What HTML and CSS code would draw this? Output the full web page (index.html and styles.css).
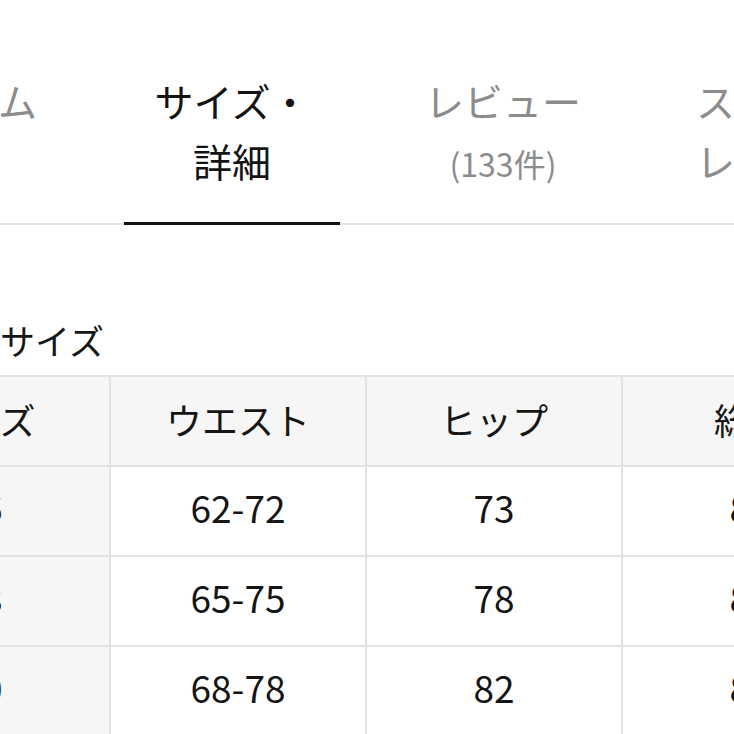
FILE: index.html
```html
<!DOCTYPE html>
<html lang="ja">
<head>
<meta charset="utf-8">
<link rel="stylesheet" href="styles.css">
</head>
<body>
<div class="page">
  <nav class="tabs">
    <div class="tab">アイテム<br>説明</div>
    <div class="tab active">サイズ・<br>詳細</div>
    <div class="tab">レビュー<br><span class="count">(133件)</span></div>
    <div class="tab">スタッフ<br>レビュー</div>
  </nav>
  <section class="content">
    <h2 class="heading">サイズ</h2>
    <table class="size-table">
      <thead>
        <tr><th>サイズ</th><th>ウエスト</th><th>ヒップ</th><th>総丈</th></tr>
      </thead>
      <tbody>
        <tr><td class="first">56</td><td>62-72</td><td>73</td><td>88</td></tr>
        <tr><td class="first">58</td><td>65-75</td><td>78</td><td>88</td></tr>
        <tr><td class="first">60</td><td>68-78</td><td>82</td><td>89</td></tr>
        <tr><td class="first">62</td><td>71-81</td><td>86</td><td>89</td></tr>
      </tbody>
    </table>
  </section>
</div>
</body>
</html>
```
FILE: styles.css
```css
html, body {
  margin: 0;
  padding: 0;
  background: #ffffff;
}
body {
  width: 734px;
  height: 734px;
  overflow: hidden;
  font-family: "Noto Sans CJK JP", "Noto Sans", sans-serif;
  color: #161616;
}
.page {
  width: 734px;
}
.tabs {
  display: flex;
  gap: 55px;
  margin-left: -147px;
  width: 1100px;
  border-bottom: 2px solid #e4e4e4;
}
.tab {
  flex: 0 0 216px;
  box-sizing: border-box;
  padding: 70px 0 30px;
  text-align: center;
  font-size: 39px;
  line-height: 60px;
  color: #8c8c8c;
  white-space: nowrap;
}
.tab .count {
  font-size: 32px;
}
.tab.active {
  color: #141414;
  border-bottom: 3px solid #111111;
  margin-bottom: -2px;
}
.content {
  margin-left: -147px;
  padding-top: 93px;
}
.heading {
  margin: 0 0 13px;
  padding-left: 147px;
  font-size: 35px;
  font-weight: 400;
  line-height: 44px;
  color: #161616;
}
.size-table {
  border-collapse: collapse;
  table-layout: fixed;
  width: 1024px;
}
.size-table th,
.size-table td {
  width: 254px;
  height: 84px;
  padding: 0 0 4px;
  border: 2px solid #e2e2e2;
  text-align: center;
  font-size: 36px;
  font-weight: 400;
  color: #151515;
}
.size-table th {
  background: #f6f6f6;
}
.size-table td {
  height: 80px;
  padding: 0 0 8px;
  font-size: 37px;
  background: #ffffff;
}
.size-table td.first {
  background: #f6f6f6;
}
```
